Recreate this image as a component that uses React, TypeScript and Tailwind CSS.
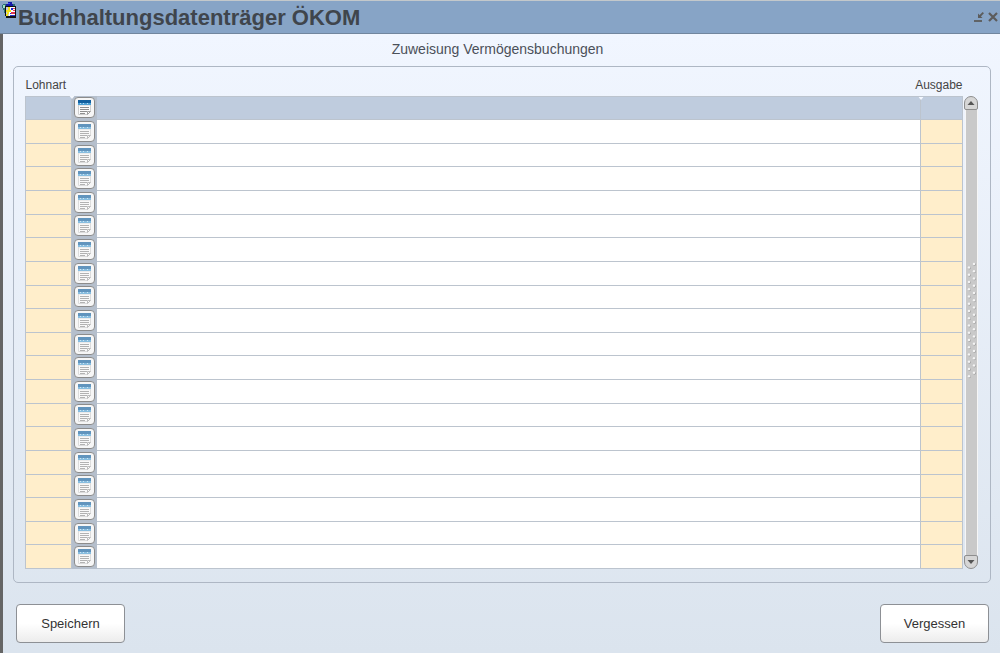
import clsx from 'clsx';

const ROW_COUNT = 20;
const GRIP_ROWS = 16;

const rows = Array.from({ length: ROW_COUNT }, (_, index) => index + 1);

const AppIcon = () => (
  <svg
    className="w-4 h-[18px] shrink-0"
    viewBox="0 0 16 18"
    shapeRendering="crispEdges"
    aria-hidden="true"
  >
    <path d="M0 4h1v-1h3v8h-1v1h-1v-3h-1v-2h-1z" fill="#2b6f72" />
    <path d="M1 4h2v3h-2z" fill="#9fe0c8" />
    <path d="M4 3h2v-2h4v2h1v3h-7z" fill="#1518a8" />
    <path d="M6 2h2v1h-2z" fill="#3c50ff" />
    <path d="M11 3h2v2h-2z" fill="#2b6f72" />
    <path d="M3 5h11v12h-10v-2h-1z" fill="#111" />
    <path d="M4 6h3v9h-3z" fill="#c9ccd6" />
    <path d="M7 6h6v9h-6z" fill="#fff" />
    <path d="M6 6h2v3h1v2h-2v2h-1v2h-2v-2h1v-2h-1v-2h2z" fill="#f2e21c" />
    <path d="M9 7h2v2h-2zM8 12h1v1h-1z" fill="#1c2cd0" />
    <path d="M11 7h2v1h-2zM11 9h2v1h-2zM9 11h4v2h-4z" fill="#e03550" />
    <path d="M8 14h5v1h-5z" fill="#2636c8" />
  </svg>
);

const ListIcon = ({ active }: { active: boolean }) => (
  <svg
    className={clsx('w-[15px] h-[17px]', !active && 'opacity-65')}
    viewBox="0 0 15 17"
    aria-hidden="true"
  >
    <path d="M1.5 6h12v6.5l-3 3h-9z" fill="#fbfbfb" stroke="#cfcfcf" />
    <path d="M1 1h13v3h-13z" fill="#12609f" />
    <path d="M1 4h13v2h-13z" fill="#4c9fd4" />
    <path d="M3.5 4v1M6.5 4v1M10.5 4v1" stroke="#b9ddf2" />
    <path d="M3 8.5h9M3 10.5h9M3 12.5h7M3 14.5h5" stroke="#8f8f8f" />
    <path d="M13.5 12.5h-3V15.5z" fill="#fff" stroke="#a0a0a0" />
  </svg>
);

const ScrollGrip = () => (
  <svg className="w-[11px] h-[120px]" viewBox="0 0 11 120" aria-hidden="true">
    {Array.from({ length: GRIP_ROWS }, (_, index) => {
      const y = 3 + index * 7.25;
      return (
        <g key={index}>
          <circle cx="8.5" cy={y + 0.6} r="1.4" fill="#a4a4a4" />
          <circle cx="8" cy={y} r="1.2" fill="#f4f4f4" />
          <circle cx="3.5" cy={y + 4.1} r="1.4" fill="#a4a4a4" />
          <circle cx="3" cy={y + 3.5} r="1.2" fill="#f4f4f4" />
        </g>
      );
    })}
  </svg>
);

const ScrollBar = () => (
  <div className="flex flex-col items-center w-[14px] h-[473px] ml-px">
    <button
      type="button"
      aria-label="Nach oben"
      className="flex items-center justify-center w-[14px] h-[14px] shrink-0 rounded-t-[7px] rounded-b-[2px] border border-[#8e8e8e] bg-[#d6d6d6]"
    >
      <svg className="w-2 h-1" viewBox="0 0 8 4" aria-hidden="true">
        <path d="M4 0l3.5 4h-7z" fill="#555" />
      </svg>
    </button>
    <div className="flex flex-1 items-center justify-center w-[13px] border-x border-[#f6f6f6] bg-[#c9c9c9] pb-6">
      <ScrollGrip />
    </div>
    <button
      type="button"
      aria-label="Nach unten"
      className="flex items-center justify-center w-[14px] h-[14px] shrink-0 rounded-b-[7px] rounded-t-[2px] border border-[#8e8e8e] bg-[#d6d6d6]"
    >
      <svg className="w-2 h-1" viewBox="0 0 8 4" aria-hidden="true">
        <path d="M4 4l3.5-4h-7z" fill="#555" />
      </svg>
    </button>
  </div>
);

const TitleBar = () => (
  <header className="flex items-start h-[34px] border-t border-t-[#c3c8cb] border-b border-b-[#71869e] bg-[#87a4c6] px-[2px]">
    <AppIcon />
    <h1 className="flex-1 text-[22px] leading-[34px] font-bold text-[#3f454c]">
      Buchhaltungsdatenträger ÖKOM
    </h1>
    <div className="flex items-center gap-1 h-8">
      <button type="button" aria-label="Verkleinern">
        <svg className="w-[10px] h-[10px]" viewBox="0 0 10 10" aria-hidden="true">
          <path d="M0 9h8" stroke="#5c5c5c" strokeWidth="1.8" />
          <path d="M9.3 0.7L5.5 4.5" stroke="#5c5c5c" strokeWidth="1.8" />
          <path d="M4 1.5V6H8.5z" fill="#5c5c5c" />
        </svg>
      </button>
      <button type="button" aria-label="Schließen">
        <svg className="w-[10px] h-[10px]" viewBox="0 0 10 10" aria-hidden="true">
          <path d="M1 1l8 8M9 1L1 9" stroke="#5c5c5c" strokeWidth="2.2" />
        </svg>
      </button>
    </div>
  </header>
);

// Small notch that marks a column edge below the header
const ColumnNotch = () => (
  <svg
    className="absolute top-0 left-0 w-[5px] h-[3px] -translate-x-1/2"
    viewBox="0 0 5 3"
    aria-hidden="true"
  >
    <path d="M0 0h5L2.5 3z" fill="#f4f8ff" />
  </svg>
);

const BookingRow = ({ row }: { row: number }) => {
  const active = row === 1;
  const fieldColor = active ? 'bg-[#bfccde]' : 'bg-[#ffeecb]';

  return (
    <tr>
      <td className={clsx('border border-[#bcc4ce] p-0', fieldColor)}>
        <input
          type="text"
          aria-label={`Lohnart ${row}`}
          className="block w-full h-5 bg-transparent px-1 text-xs outline-none"
        />
      </td>
      <td className="relative border-x border-[#b5bfcc] bg-[#b5bfcc] p-0">
        {active && <ColumnNotch />}
        <button
          type="button"
          aria-label={`Lohnart ${row} auswählen`}
          className="flex items-center justify-center w-[21px] h-[21px] mx-auto rounded-[4px] border border-[#8c8c8c] bg-[#f6f6f6]"
        >
          <ListIcon active={active} />
        </button>
      </td>
      <td
        className={clsx(
          'border border-[#bcc4ce] p-0',
          active ? 'bg-[#bfccde]' : 'bg-white'
        )}
      >
        <input
          type="text"
          aria-label={`Bezeichnung ${row}`}
          className="block w-full h-5 bg-transparent px-1 text-xs outline-none"
        />
      </td>
      <td className={clsx('relative border border-[#bcc4ce] p-0', fieldColor)}>
        {active && <ColumnNotch />}
        <input
          type="text"
          aria-label={`Ausgabe ${row}`}
          className="block w-full h-5 bg-transparent px-1 text-xs outline-none"
        />
      </td>
    </tr>
  );
};

const BookingGrid = () => (
  <div className="flex items-end">
    <div className="flex-1 min-w-0">
      <table className="w-full h-[502px] table-fixed border-collapse">
        <colgroup>
          <col className="w-[46px]" />
          <col className="w-[25px]" />
          <col />
          <col className="w-[42px]" />
        </colgroup>
        <thead>
          <tr className="h-[29px] text-xs text-[#444]">
            <th scope="col" className="p-0 pt-2 text-left font-normal">
              Lohnart
            </th>
            <td colSpan={2} />
            <th scope="col" className="p-0 pt-2 font-normal">
              <span className="flex justify-end">Ausgabe</span>
            </th>
          </tr>
        </thead>
        <tbody>
          {rows.map((row) => (
            <BookingRow key={row} row={row} />
          ))}
        </tbody>
      </table>
    </div>
    <ScrollBar />
  </div>
);

const buttonClass =
  'w-[109px] h-[39px] rounded-[4px] border border-[#8d9095] bg-linear-to-b from-white from-50% to-[#ececec] text-[13px] text-[#333]';

const App = () => (
  <div className="flex flex-col min-h-screen bg-[#eff5ff] font-['Liberation_Sans',sans-serif]">
    <TitleBar />
    <main className="flex-1 border-l-[3px] border-[#656565] bg-linear-to-b from-[#f1f6ff] to-[#dbe4ee]">
      <h2 className="h-8 pr-2 text-center text-sm leading-[30px] text-[#4b5059]">
        Zuweisung Vermögensbuchungen
      </h2>
      <form onSubmit={(event) => event.preventDefault()}>
        <section className="ml-[10px] mr-[9px] h-[517px] rounded-[5px] border border-[#aeb7c4] pl-[11px] pr-3">
          <BookingGrid />
        </section>
        <div className="flex justify-between pt-[21px] pl-[13px] pr-[11px] pb-[10px]">
          <button type="submit" className={buttonClass}>
            Speichern
          </button>
          <button type="reset" className={buttonClass}>
            Vergessen
          </button>
        </div>
      </form>
    </main>
  </div>
);

export default App;
